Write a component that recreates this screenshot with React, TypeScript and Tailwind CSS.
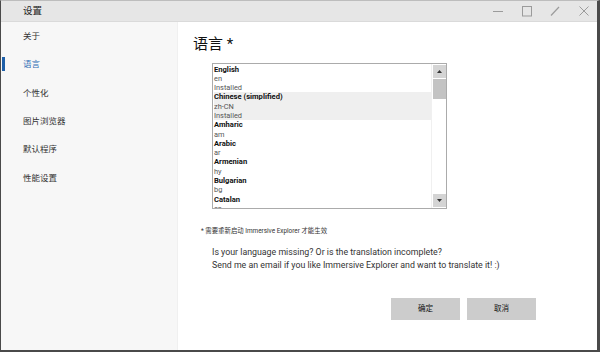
import React from "react"

const font = { fontFamily: 'Roboto, "Noto Sans CJK SC", sans-serif' }

const navItems = ["关于", "语言", "个性化", "图片浏览器", "默认程序", "性能设置"]

const languages = [
  { name: "English", code: "en", installed: true },
  { name: "Chinese (simplified)", code: "zh-CN", installed: true, selected: true },
  { name: "Amharic", code: "am" },
  { name: "Arabic", code: "ar" },
  { name: "Armenian", code: "hy" },
  { name: "Bulgarian", code: "bg" },
  { name: "Catalan", code: "ca" },
]

function TitleBar() {
  return (
    <div className="h-[21px] shrink-0 flex items-center bg-[#e6e6e6] border-b border-[#dadada]">
      <div className="pl-[22px] text-[9.5px] text-[#222]">设置</div>
      <div className="ml-auto flex items-center h-full text-[#9b9b9b]">
        <svg width="12" height="12" viewBox="0 0 12 12" className="mr-[17px]">
          <line x1="1" y1="6.5" x2="11" y2="6.5" stroke="currentColor" strokeWidth="1" />
        </svg>
        <svg width="12" height="12" viewBox="0 0 12 12" className="mr-[16px]">
          <rect x="1.5" y="1.5" width="9" height="9.5" fill="none" stroke="currentColor" strokeWidth="1" />
        </svg>
        <svg width="12" height="12" viewBox="0 0 12 12" className="mr-[17px]">
          <line x1="2" y1="10.5" x2="10" y2="2" stroke="currentColor" strokeWidth="1.2" />
        </svg>
        <svg width="12" height="12" viewBox="0 0 12 12" className="mr-[7px]">
          <path d="M1.5 1.5 L10.5 10.5 M10.5 1.5 L1.5 10.5" stroke="currentColor" strokeWidth="1" fill="none" />
        </svg>
      </div>
    </div>
  )
}

function Sidebar() {
  return (
    <div className="w-[177px] shrink-0 bg-[#f7f7f7] border-r border-[#f0f0f0]">
      {navItems.map((n, i) => (
        <div key={n} className="relative h-[28.4px] flex items-center pl-[22px] text-[8.5px]">
          {i === 1 && <div className="absolute left-[1px] top-[7px] w-[3px] h-[14px] bg-[#1e5fa8]" />}
          <span className={i === 1 ? "text-[#2d6db5]" : "text-[#333]"}>{n}</span>
        </div>
      ))}
    </div>
  )
}

function ListBox() {
  return (
    <div className="ml-[19px] w-[235px] h-[146px] border border-[#ababab] flex overflow-hidden bg-white">
      <div className="flex-1 pt-[0.5px] pl-[1px]">
        {languages.map(l => (
          <div key={l.code} className={l.selected ? "bg-[#efefef]" : ""}>
            <div className="h-[9.3px] leading-[9.3px] text-[7.6px] font-bold text-[#111] whitespace-nowrap">{l.name}</div>
            <div className="h-[9.3px] leading-[9.3px] text-[7.4px] text-[#555]">{l.code}</div>
            {l.installed && <div className="h-[9.3px] leading-[9.3px] text-[7.4px] text-[#555]">Installed</div>}
          </div>
        ))}
      </div>
      <div className="w-[15px] flex flex-col items-center bg-white border-l border-[#f0f0f0] py-[1px]">
        <div className="w-[13px] h-[13px] bg-[#d4d4d4] flex items-center justify-center">
          <svg width="5" height="3" viewBox="0 0 5 3"><path d="M0 3 L2.5 0 L5 3 Z" fill="#333" /></svg>
        </div>
        <div className="w-[13px] h-[20px] bg-[#c3c3c3] mt-[1px]" />
        <div className="flex-1" />
        <div className="w-[13px] h-[13px] bg-[#d4d4d4] flex items-center justify-center">
          <svg width="5" height="3" viewBox="0 0 5 3"><path d="M0 0 L2.5 3 L5 0 Z" fill="#333" /></svg>
        </div>
      </div>
    </div>
  )
}

export default function App() {
  return (
    <div className="w-[600px] h-[352px] flex flex-col overflow-hidden bg-white border-l border-r-[3px] border-b-2 border-t border-t-[#bdbdbd] border-[#4a4a4a]" style={font}>
      <TitleBar />
      <div className="flex flex-1 min-h-0">
        <Sidebar />
        <div className="flex-1 flex flex-col pl-[15px]">
          <div className="mt-[12px] h-[20px] leading-[20px] text-[15px] text-[#111]">语言 *</div>
          <div className="mt-[9px]">
            <ListBox />
          </div>
          <div className="mt-[17px] ml-[8px] h-[10px] leading-[10px] text-[6.4px] text-[#333]">* 需要重新启动 Immersive Explorer 才能生效</div>
          <div className="mt-[10px] ml-[19px] text-[8.8px] leading-[13px] text-[#333]">
            <div>Is your language missing? Or is the translation incomplete?</div>
            <div>Send me an email if you like Immersive Explorer and want to translate it! :)</div>
          </div>
          <div className="mt-[26px] flex justify-end gap-[7px] pr-[61px]">
            <button className="w-[69px] h-[22px] bg-[#cccccc] text-[7.5px] text-[#111]">确定</button>
            <button className="w-[69px] h-[22px] bg-[#cccccc] text-[7.5px] text-[#111]">取消</button>
          </div>
        </div>
      </div>
    </div>
  )
}
